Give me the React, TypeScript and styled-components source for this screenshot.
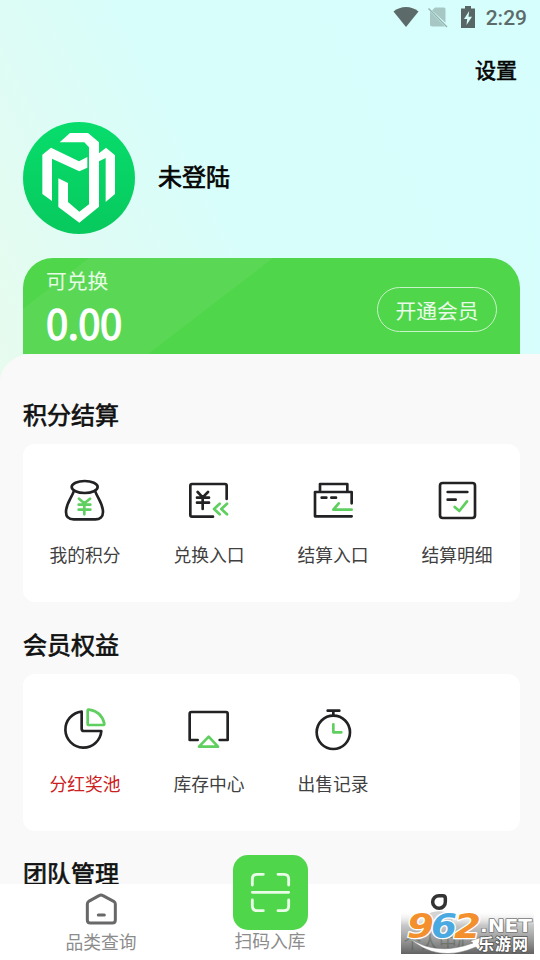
import React from "react";
import styled, { createGlobalStyle } from "styled-components";

const GREEN = "#4fd64a";
const INK = "#222224";
const LEAF = "#5fcf5f";

const GlobalStyle = createGlobalStyle`
  * { box-sizing: border-box; }
  body {
    margin: 0;
    font-family: "Noto Sans CJK SC", "Noto Sans", sans-serif;
    color: #111;
  }
`;

const Screen = styled.div`
  position: relative;
  display: flex;
  flex-direction: column;
  width: 540px;
  height: 960px;
  overflow: hidden;
  background: linear-gradient(63deg, #e8fbed 0%, #defcf5 25%, #d8fefb 43%, #d6fefc 100%) top / 540px 400px no-repeat #fff;
`;

const StatusBar = styled.div`
  display: flex;
  align-items: center;
  justify-content: flex-end;
  height: 37px;
  padding-right: 13px;
`;

const StatusIcons = styled.div`
  display: flex;
  align-items: center;
  gap: 9px;
  margin-top: -3px;
  & > :last-child { margin-left: 4px; }
`;

const Clock = styled.span`
  margin-left: 11px;
  font: 500 21px/37px Roboto, sans-serif;
  color: #5c6b6a;
`;

const Toolbar = styled.div`
  display: flex;
  justify-content: flex-end;
  height: 85px;
  padding: 17px 23px 0 0;
`;

const Strong = styled.span<{ $size: number }>`
  font-size: ${(p) => p.$size}px;
  line-height: 30px;
  color: #050505;
  -webkit-text-stroke: 0.7px #050505;
`;

const Profile = styled.div`
  display: flex;
  align-items: center;
  gap: 23px;
  height: 112px;
  padding-left: 23px;
  & > span { margin-bottom: 4px; }
`;

const Balance = styled.section`
  display: flex;
  justify-content: space-between;
  height: 96px;
  margin: 24px 20px 0 23px;
  padding: 0 23px;
  border-radius: 30px 30px 0 0;
  color: #fff;
  background: linear-gradient(
    142.5deg,
    ${GREEN} 0 40px,
    #5ad855 40.5px 152px,
    ${GREEN} 152.5px
  );
`;

const BalanceFigures = styled.div`
  display: flex;
  flex-direction: column;
`;

const BalanceLabel = styled.span`
  margin-top: 7px;
  font-size: 20.8px;
  line-height: 30px;
  color: #e6fae5;
`;

const BalanceAmount = styled.span`
  margin-top: 4px;
  font-size: 40px;
  line-height: 46px;
  letter-spacing: -0.5px;
  -webkit-text-stroke: 1.3px #fff;
`;

const JoinButton = styled.button`
  width: 120px;
  height: 45px;
  margin-top: 29px;
  padding: 1px 0 0;
  border: 1px solid #c9f3c8;
  border-radius: 23px;
  background: none;
  font: 20.8px/40px "Noto Sans CJK SC", sans-serif;
  color: #e9fbe8;
`;

const Panel = styled.main`
  flex: 0 0 530px;
  height: 530px;
  padding: 45px 20px 0 23px;
  overflow: hidden;
  border-top-left-radius: 32px 27px;
  background: #f9f9f9;
`;

const SectionTitle = styled.h2`
  margin: 0 0 15px;
  font-size: 24px;
  font-weight: 400;
  line-height: 30px;
  color: #111;
  -webkit-text-stroke: 0.7px #111;
`;

const Card = styled.div<{ $height: number; $top: number }>`
  display: grid;
  grid-template-columns: repeat(4, 124px);
  align-content: start;
  height: ${(p) => p.$height}px;
  margin-bottom: 27px;
  padding-top: ${(p) => p.$top}px;
  border-radius: 12px;
  background: #fff;
`;

const Entry = styled.div`
  display: flex;
  flex-direction: column;
  align-items: center;
  gap: 17px;
`;

const EntryLabel = styled.span<{ $alert?: boolean }>`
  font-size: 17.8px;
  line-height: 24px;
  white-space: nowrap;
  color: ${(p) => (p.$alert ? "#cb2020" : "#404040")};
`;

const Glyph = styled.svg`
  display: block;
  flex: none;
  fill: none;
  stroke: ${INK};
  stroke-width: 8;
  stroke-linecap: round;
  stroke-linejoin: round;
`;

const NavBar = styled.nav`
  display: flex;
  justify-content: space-between;
  flex: 0 0 76px;
  padding: 0 51px;
  background: #fff;
`;

const NavItem = styled.div<{ $top?: number }>`
  display: flex;
  flex-direction: column;
  align-items: center;
  width: 100px;
  padding-top: ${(p) => p.$top ?? 0}px;
`;

const NavLabel = styled.span<{ $top: number; $active?: boolean }>`
  margin-top: ${(p) => p.$top}px;
  font-size: 17.8px;
  line-height: 24px;
  color: ${(p) => (p.$active ? "#3c6b3a" : "#8c8c8c")};
`;

const ScanTile = styled.div`
  display: flex;
  align-items: center;
  justify-content: center;
  width: 75px;
  height: 75px;
  margin-top: -29px;
  border-radius: 15px;
  background: ${GREEN};
`;

const Watermark = styled.svg`
  position: absolute;
  left: 401px;
  top: 906px;
`;

const Wifi = () => (
  <svg width="26" height="22" viewBox="0 0 26 22">
    <path d="M0.500 5.400C7.500-0.600 18.500-0.600 25.500 5.400L13 21Z" fill="#5c6b6a" />
  </svg>
);

const NoSim = () => (
  <svg width="20" height="22" viewBox="0 0 20 22">
    <path d="M7 1.500H16Q17.500 1.500 17.500 3V16.800L4 4.500Z M2 5.500L17 20.500H4Q2 20.500 2 18.500Z" fill="#a6c7c3" />
    <path d="M0.500 2.500L19 21" stroke="#93b3af" strokeWidth="1.500" />
  </svg>
);

const Battery = () => (
  <svg width="14" height="22" viewBox="0 0 14 22">
    <path d="M4 0H10V2.500H14V22H0V2.500H4Z" fill="#586766" />
    <path d="M8.200 5L3 13H6.200L5.500 19L11 10.800H7.500Z" fill="#d6fefb" />
  </svg>
);

const Avatar = () => (
  <svg width="112" height="112" viewBox="39 36 336 336">
    <defs>
      <linearGradient id="avatarFill" x1="0" y1="0" x2="0" y2="1">
        <stop offset="0" stopColor="#07dd6c" />
        <stop offset="1" stopColor="#08c95d" />
      </linearGradient>
    </defs>
    <circle cx="207" cy="204" r="168" fill="url(#avatarFill)" />
    <g fill="#fff">
      <path d="M97 134L123 113L207 154L232 141V173L208 184L126 146V273L97 252Z" />
      <path d="M149 97L180 69H234L267 97V130L288 113L315 136V252L287 276V144L267 154V290L208 338L145 291V205L174 219V276L208 305L237 283V112L223 97Z" />
    </g>
  </svg>
);

const MoneyBag = () => (
  <Glyph width="48" height="48" viewBox="153 261 144 144">
    <ellipse cx="224" cy="291" rx="39" ry="18" />
    <path d="M191 305C183 327 168 340 168 366C168 381 177 388 191 388H256C270 388 279 380 279 366C279 340 264 327 256 305" />
    <path d="M207 326L223 340L240 326M223 340V373M206 344H241M206 359H241" stroke={LEAF} />
  </Glyph>
);

const Exchange = () => (
  <Glyph width="48" height="48" viewBox="525 261 144 144">
    <path d="M609 380H546Q541 380 541 375V287Q541 282 546 282H645Q650 282 650 287V327" />
    <path d="M563 306L578 322L594 306M578 322V357M561 323H597M561 338H597" />
    <path d="M629 341L612 357L629 373M651 341L634 357L651 373" stroke={LEAF} />
  </Glyph>
);

const Checkout = () => (
  <Glyph width="48" height="48" viewBox="87 21 144 144">
    <path d="M215 139H105V66H215V100M120 65V42H202V65M125 83H139M154 83H168" />
    <path d="M215 119H160L176 100" stroke={LEAF} />
  </Glyph>
);

const Statement = () => (
  <Glyph width="48" height="48" viewBox="459 21 144 144">
    <rect x="480" y="39" width="105" height="105" rx="8" />
    <path d="M503 66H562M503 89H527" />
    <path d="M524 111L538 123L561 94" stroke={LEAF} />
  </Glyph>
);

const Pie = () => (
  <Glyph width="48" height="48" viewBox="153 258 144 144">
    <path d="M215 275A54 54 0 1 0 274 333H222Q215 333 215 326Z" />
    <path d="M233 272Q233 268 238 269C262 273 278 289 283 311Q283 315 278 315H237Q233 315 233 311Z" stroke={LEAF} />
  </Glyph>
);

const Stock = () => (
  <Glyph width="48" height="48" viewBox="525 258 144 144">
    <path d="M563 360H539V281Q539 276 544 276H648Q653 276 653 281V360H629" />
    <path d="M596 350L624 380H567Z" stroke={LEAF} />
  </Glyph>
);

const Stopwatch = () => (
  <Glyph width="48" height="48" viewBox="87 48 144 144">
    <circle cx="160" cy="127" r="50" />
    <path d="M143 62H178M160 62V76" />
    <path d="M160 103V127H184" stroke={LEAF} />
  </Glyph>
);

const House = () => (
  <svg width="32" height="32" viewBox="253 160 96 96" fill="none" stroke="#686868" strokeWidth="9" strokeLinejoin="round" strokeLinecap="round">
    <path d="M260 193Q260 188 264 185L295 168Q301 164 307 168L339 185Q344 188 344 193V241Q344 250 335 250H269Q260 250 260 241Z" />
    <path d="M293 226H311" />
  </svg>
);

const ScanFrame = () => (
  <svg width="41" height="41" viewBox="120 96 123 123" fill="none" stroke="#e9fce8" strokeWidth="8.500" strokeLinecap="round">
    <path d="M127 135V117Q127 103 141 103H160M204 103H222Q236 103 236 117V135M236 180V198Q236 212 222 212H204M160 212H141Q127 212 127 198V180M127 157H236" />
  </svg>
);

const Person = () => (
  <svg width="48" height="38" viewBox="75 0 144 114" fill="none">
    <path d="M105 114Q105 82 147 82Q188 82 188 114Z" fill="#cfcfcf" />
    <path d="M147 35H158Q166 35 166 43V53A19 19 0 1 1 147 35Z" stroke="#333" strokeWidth="10.500" />
  </svg>
);

const SiteMark = () => (
  <Watermark width="133" height="48" viewBox="0 0 133 48">
    <defs>
      <linearGradient id="markFade" x1="0" y1="0" x2="0" y2="1">
        <stop offset="0.08" stopColor="#fff" stopOpacity="0" />
        <stop offset="0.4" stopColor="#b0b0b0" stopOpacity="0.7" />
        <stop offset="1" stopColor="#555" stopOpacity="0.92" />
      </linearGradient>
    </defs>
    <rect width="133" height="48" fill="url(#markFade)" />
    <path d="M7 31Q34 51 72 37L69 35L84 30L78 45L75 41Q36 58 7 31Z" fill="#fff" stroke="#777" strokeWidth="0.500" />
    <g fontFamily="DejaVu Sans" fontWeight="700" paintOrder="stroke" strokeLinejoin="round">
      <g fontSize="34" fontStyle="italic" stroke="#fff" strokeWidth="2.500">
        <text x="6" y="32" fill="#f3902d" textLength="27" lengthAdjust="spacingAndGlyphs">9</text>
        <text x="30" y="32" fill="#4ba9e2" textLength="26" lengthAdjust="spacingAndGlyphs">6</text>
        <text x="53" y="32" fill="#f3902d" textLength="27" lengthAdjust="spacingAndGlyphs">2</text>
      </g>
      <text x="79" y="26" fontSize="17.500" fill="#fff" stroke="#777" strokeWidth="1.500" textLength="52" lengthAdjust="spacingAndGlyphs">.NET</text>
    </g>
    <text x="77" y="44" fontFamily="Noto Sans CJK SC" fontWeight="700" fontSize="16" fill="#fff" stroke="#555" strokeWidth="1.500" paintOrder="stroke" textLength="50">乐游网</text>
  </Watermark>
);

const settlement = [
  { label: "我的积分", Icon: MoneyBag },
  { label: "兑换入口", Icon: Exchange },
  { label: "结算入口", Icon: Checkout },
  { label: "结算明细", Icon: Statement },
];

const benefits = [
  { label: "分红奖池", Icon: Pie, alert: true },
  { label: "库存中心", Icon: Stock },
  { label: "出售记录", Icon: Stopwatch },
];

export default function App() {
  return (
    <>
      <GlobalStyle />
      <Screen>
        <StatusBar>
          <StatusIcons>
            <Wifi />
            <NoSim />
            <Battery />
          </StatusIcons>
          <Clock>2:29</Clock>
        </StatusBar>
        <Toolbar>
          <Strong $size={21}>设置</Strong>
        </Toolbar>
        <Profile>
          <Avatar />
          <Strong $size={24}>未登陆</Strong>
        </Profile>
        <Balance>
          <BalanceFigures>
            <BalanceLabel>可兑换</BalanceLabel>
            <BalanceAmount>0.00</BalanceAmount>
          </BalanceFigures>
          <JoinButton>开通会员</JoinButton>
        </Balance>
        <Panel>
          <SectionTitle>积分结算</SectionTitle>
          <Card $height={158} $top={33}>
            {settlement.map(({ label, Icon }) => (
              <Entry key={label}>
                <Icon />
                <EntryLabel>{label}</EntryLabel>
              </Entry>
            ))}
          </Card>
          <SectionTitle>会员权益</SectionTitle>
          <Card $height={157} $top={32}>
            {benefits.map(({ label, Icon, alert }) => (
              <Entry key={label}>
                <Icon />
                <EntryLabel $alert={alert}>{label}</EntryLabel>
              </Entry>
            ))}
          </Card>
          <SectionTitle>团队管理</SectionTitle>
        </Panel>
        <NavBar>
          <NavItem $top={9}>
            <House />
            <NavLabel $top={4}>品类查询</NavLabel>
          </NavItem>
          <NavItem>
            <ScanTile>
              <ScanFrame />
            </ScanTile>
            <NavLabel $top={-2}>扫码入库</NavLabel>
          </NavItem>
          <NavItem>
            <Person />
            <NavLabel $top={7} $active>个人中心</NavLabel>
          </NavItem>
        </NavBar>
        <SiteMark />
      </Screen>
    </>
  );
}
